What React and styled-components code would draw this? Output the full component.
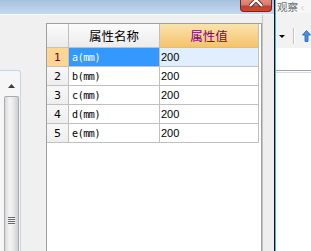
import React from "react";
import styled, { createGlobalStyle } from "styled-components";

const Global = createGlobalStyle`
  html, body { margin: 0; padding: 0; background: #f0f0f0; overflow: hidden; }
  body { font-family: "Liberation Sans", Arial, sans-serif; }
  #root { width: 311px; height: 251px; }
`;

const Screen = styled.div`
  display: flex;
  width: 311px;
  height: 251px;
  overflow: hidden;
`;

const LeftWindow = styled.div`
  width: 276px;
  display: flex;
  flex-direction: column;
  background: #f0f0f0;
`;

const TitleBar = styled.div`
  height: 15px;
  flex: none;
  display: flex;
  justify-content: flex-end;
  align-items: flex-start;
  padding-right: 2px;
  background: linear-gradient(#a8c1de, #c6d8ec);
  border-bottom: 1px solid #f6f8fb;
  box-sizing: border-box;
`;

const CloseButton = styled.div`
  width: 32px;
  height: 12px;
  box-sizing: border-box;
  border: 1px solid #7e2419;
  border-top: none;
  border-radius: 0 0 4px 4px;
  background: linear-gradient(#dc8c80 0%, #d77a6c 45%, #c5412f 55%, #c74a36 100%);
  display: flex;
  justify-content: center;
  align-items: flex-start;
  overflow: hidden;
`;

const Body = styled.div`
  flex: 1;
  display: flex;
  min-height: 0;
`;

const LeftStrip = styled.div`
  width: 21px;
  flex: none;
  display: flex;
  flex-direction: column;
  padding-top: 55px;
`;

const SidePanel = styled.div`
  flex: 1;
  display: flex;
  background: #f6f6f6;
  border-top: 1px solid #c8d4e2;
  border-right: 1px solid #c8d4e2;
  border-top-right-radius: 3px;
  padding-left: 4px;
`;

const ScrollBar = styled.div`
  width: 15px;
  display: flex;
  flex-direction: column;
  align-items: stretch;
`;

const ScrollArrow = styled.div`
  height: 25px;
  flex: none;
  display: flex;
  justify-content: center;
  align-items: flex-start;
  padding-top: 13px;
  box-sizing: border-box;
`;

const Thumb = styled.div`
  flex: 1;
  border: 1px solid #a7acb2;
  border-bottom: none;
  border-radius: 2px 2px 0 0;
  background: linear-gradient(90deg, #d8d8d8 0%, #f4f4f4 35%, #ebebeb 60%, #cfcfcf 100%);
  display: flex;
  justify-content: center;
  padding-top: 120px;
  box-sizing: border-box;
`;

const Grip = styled.div`
  width: 7px;
  height: 8px;
  background: repeating-linear-gradient(#5d6a78 0 1px, #f4f4f4 1px 2px);
`;

const Gap = styled.div`
  width: 25px;
  flex: none;
`;

const Grid = styled.div`
  margin-top: 8px;
  width: 216px;
  flex: none;
  box-sizing: border-box;
  border: 1px solid #a0a0a0;
  border-bottom: none;
  background: #fff;
  display: grid;
  grid-template-columns: 22px 91px 99px;
  grid-auto-rows: 19px;
  grid-template-rows: 24px;
  align-content: start;
`;

const Cell = styled.div`
  box-sizing: border-box;
  border-right: 1px solid #c0c0c0;
  border-bottom: 1px solid #c0c0c0;
  display: flex;
  align-items: center;
  overflow: hidden;
  white-space: nowrap;
`;

const CornerCell = styled(Cell)`
  background: linear-gradient(#fbfbfb, #ebebeb);
`;

const HeadCell = styled(Cell)`
  justify-content: center;
  font-family: "Noto Sans CJK SC", sans-serif;
  font-size: 12.5px;
  color: ${(p) => (p.$accent ? "#800080" : "#000")};
  background: ${(p) =>
    p.$accent
      ? "linear-gradient(#fbe2ad, #f4c46c)"
      : "linear-gradient(#fbfbfb, #ececec)"};
`;

const RowHead = styled(Cell)`
  justify-content: center;
  font-family: "DejaVu Sans", sans-serif;
  font-size: 11px;
  color: ${(p) => (p.$active ? "#6a0030" : "#000")};
  background: ${(p) => (p.$active ? "#fdd693" : "linear-gradient(#f8f8f8, #eeeeee)")};
`;

const NameCell = styled(Cell)`
  padding-left: 3px;
  font-family: "DejaVu Sans Mono", monospace;
  font-size: 10px;
  letter-spacing: -0.4px;
  color: ${(p) => (p.$active ? "#fff" : "#000")};
  background: ${(p) => (p.$active ? "#3399ff" : "#fff")};
`;

const ValueCell = styled(Cell)`
  padding-left: 1px;
  font-family: "Liberation Sans", Arial, sans-serif;
  font-size: 11px;
  color: #000;
  background: ${(p) => (p.$active ? "#e0eefe" : "#fff")};
`;

const RightGutter = styled.div`
  flex: 1;
  background: #eeeeee;
  border-left: 1px solid #c4c4c4;
`;

const Edge = styled.div`
  width: 2px;
  flex: none;
  background: linear-gradient(90deg, #0b0b0b 0 1px, #27c4f0 1px 2px);
`;

const RightPane = styled.div`
  flex: 1;
  display: flex;
  flex-direction: column;
  background: #fff;
`;

const TabLabel = styled.div`
  height: 13px;
  flex: none;
  display: flex;
  align-items: center;
  gap: 3px;
  padding-left: 1px;
  font-family: "Noto Sans CJK SC", sans-serif;
  font-size: 10.5px;
  line-height: 12px;
  color: #6e7178;
  background: #f7f7f7;
`;

const Faint = styled.span`
  color: #c8c8c8;
`;

const Toolbar = styled.div`
  height: 35px;
  flex: none;
  display: flex;
  align-items: center;
  padding: 11px 0 0 3px;
  box-sizing: border-box;
  background: #f2f2f2;
`;

const Caret = styled.div`
  width: 0;
  height: 0;
  border-left: 3px solid transparent;
  border-right: 3px solid transparent;
  border-top: 3px solid #000;
`;

const Separator = styled.div`
  width: 1px;
  height: 16px;
  background: #c2c2c2;
  margin: 0 8px;
  box-shadow: 1px 0 0 #fff;
`;

const WhiteBand = styled.div`
  height: 22px;
  flex: none;
  background: #fff;
`;

const Rule = styled.div`
  height: 3px;
  flex: none;
  border-top: 1px solid #9ea2ac;
  border-bottom: 1px solid #dadada;
  box-sizing: border-box;
`;

const rows = ["a", "b", "c", "d", "e"];

export default function App() {
  return (
    <Screen>
      <Global />
      <LeftWindow>
        <TitleBar>
          <CloseButton>
            <svg width="14" height="8" viewBox="0 0 14 8">
              <path d="M1 -6 L13 6 M13 -6 L1 6" stroke="#5a1a12" strokeWidth="4" />
              <path d="M1 -6 L13 6 M13 -6 L1 6" stroke="#ffffff" strokeWidth="2.4" />
            </svg>
          </CloseButton>
        </TitleBar>
        <Body>
          <LeftStrip>
            <SidePanel>
              <ScrollBar>
                <ScrollArrow>
                  <svg width="7" height="4" viewBox="0 0 7 4">
                    <path d="M0 4 L3.5 0 L7 4 Z" fill="#3d3d46" />
                  </svg>
                </ScrollArrow>
                <Thumb>
                  <Grip />
                </Thumb>
              </ScrollBar>
            </SidePanel>
          </LeftStrip>
          <Gap />
          <Grid>
            <CornerCell />
            <HeadCell>属性名称</HeadCell>
            <HeadCell $accent>属性值</HeadCell>
            {rows.map((r, i) => (
              <React.Fragment key={r}>
                <RowHead $active={i === 0}>{i + 1}</RowHead>
                <NameCell $active={i === 0}>{r}(mm)</NameCell>
                <ValueCell $active={i === 0}>200</ValueCell>
              </React.Fragment>
            ))}
          </Grid>
          <RightGutter />
        </Body>
      </LeftWindow>
      <Edge />
      <RightPane>
        <TabLabel>
          <span>观察</span>
          <Faint>‹</Faint>
        </TabLabel>
        <Toolbar>
          <Caret />
          <Separator />
          <svg width="9" height="12" viewBox="0 0 9 12">
            <path d="M4.5 0.5 L8.5 5 L6 5 L6 11.5 L3 11.5 L3 5 L0.5 5 Z" fill="#4a90e2" stroke="#1f5fb0" strokeWidth="0.8" />
          </svg>
        </Toolbar>
        <WhiteBand />
        <Rule />
      </RightPane>
    </Screen>
  );
}
